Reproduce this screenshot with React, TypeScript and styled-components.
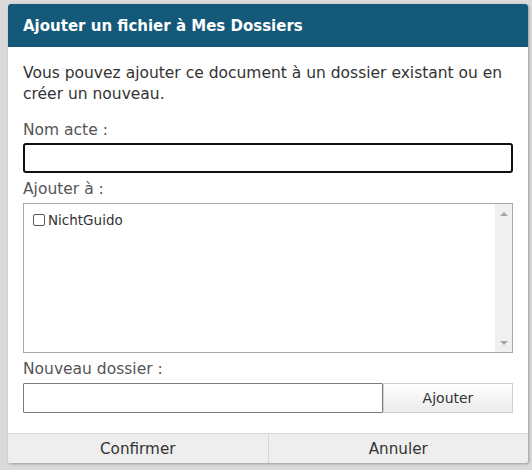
import React from "react";
import styled, { createGlobalStyle } from "styled-components";

const Global = createGlobalStyle`
  html, body { margin: 0; padding: 0; }
  body {
    width: 532px;
    height: 470px;
    background: #dadada;
    font-family: "DejaVu Sans", Verdana, sans-serif;
    overflow: hidden;
  }
`;

const Page = styled.div`
  padding: 4px 4px 0 8px;
`;

const Dialog = styled.div`
  width: 520px;
  height: 459px;
  background: #fff;
  display: flex;
  flex-direction: column;
  box-shadow: 1px 1px 3px rgba(0, 0, 0, 0.3);
  border-radius: 3px;
  overflow: hidden;
`;

const Header = styled.div`
  height: 43px;
  box-sizing: border-box;
  padding: 1px 15px 0;
  background: #145979;
  color: #fff;
  font-weight: bold;
  font-size: 15px;
  display: flex;
  align-items: center;
`;

const Body = styled.div`
  flex: 1;
  padding: 16px 15px 0 15px;
  display: flex;
  flex-direction: column;
  color: #333;
  font-size: 15.5px;
`;

const Intro = styled.p`
  margin: 0 0 15px;
  line-height: 21px;
  color: #333;
`;

const Label = styled.div`
  color: #555;
  line-height: 20px;
  margin-bottom: 4px;
`;

const TextInput = styled.div<{ $focused?: boolean }>`
  box-sizing: border-box;
  height: 30px;
  margin-top: ${(p) => (p.$focused ? "-1px" : "0")};
  border: ${(p) => (p.$focused ? "2px solid #111" : "1px solid #7d7d7d")};
  border-radius: ${(p) => (p.$focused ? "3px" : "1px")};
  background: #fff;
  flex: 1;
`;

const Field = styled.div`
  display: flex;
  flex-direction: column;
  margin-bottom: 6px;
`;

const ListBox = styled.div`
  box-sizing: border-box;
  height: 150px;
  border: 1px solid #a9a9a9;
  display: flex;
`;

const ListContent = styled.div`
  flex: 1;
  padding: 7px 9px;
`;

const Item = styled.label`
  display: flex;
  align-items: center;
  gap: 3px;
  color: #333;
  font-size: 13.5px;
  line-height: 18px;
`;

const Box = styled.span`
  box-sizing: border-box;
  width: 12px;
  height: 12px;
  border: 1px solid #5a5a5a;
  border-radius: 2px;
  background: #fff;
`;

const Scrollbar = styled.div`
  width: 17px;
  background: #f0f0f0;
  display: flex;
  flex-direction: column;
  justify-content: space-between;
  align-items: center;
  padding: 8px 0 7px;
`;

const Arrow = styled.svg`
  display: block;
`;

const Row = styled.div`
  display: flex;
`;

const AddButton = styled.div`
  box-sizing: border-box;
  width: 130px;
  height: 30px;
  border: 1px solid #cfcfcf;
  background: linear-gradient(#ffffff, #ebebeb);
  display: flex;
  align-items: center;
  justify-content: center;
  font-size: 14px;
  color: #333;
`;

const Footer = styled.div`
  height: 29px;
  background: #eeeeee;
  border-top: 1px solid #d6d6d6;
  display: flex;
`;

const FooterButton = styled.div<{ $divider?: boolean }>`
  flex: 1;
  display: flex;
  align-items: center;
  justify-content: center;
  color: #333;
  font-size: 15.2px;
  border-left: ${(p) => (p.$divider ? "1px solid #d6d6d6" : "none")};
`;

export default function App() {
  return (
    <>
      <Global />
      <Page>
        <Dialog>
          <Header>Ajouter un fichier à Mes Dossiers</Header>
          <Body>
            <Intro>
              Vous pouvez ajouter ce document à un dossier existant ou en créer un nouveau.
            </Intro>
            <Field>
              <Label>Nom acte :</Label>
              <Row>
                <TextInput $focused />
              </Row>
            </Field>
            <Field>
              <Label>Ajouter à :</Label>
              <ListBox>
                <ListContent>
                  <Item>
                    <Box />
                    NichtGuido
                  </Item>
                </ListContent>
                <Scrollbar>
                  <Arrow width="8" height="4" viewBox="0 0 8 4">
                    <path d="M0 4 L4 0 L8 4 Z" fill="#a3a3a3" />
                  </Arrow>
                  <Arrow width="8" height="4" viewBox="0 0 8 4">
                    <path d="M0 0 L4 4 L8 0 Z" fill="#a3a3a3" />
                  </Arrow>
                </Scrollbar>
              </ListBox>
            </Field>
            <Field>
              <Label>Nouveau dossier :</Label>
              <Row>
                <TextInput />
                <AddButton>Ajouter</AddButton>
              </Row>
            </Field>
          </Body>
          <Footer>
            <FooterButton>Confirmer</FooterButton>
            <FooterButton $divider>Annuler</FooterButton>
          </Footer>
        </Dialog>
      </Page>
    </>
  );
}
